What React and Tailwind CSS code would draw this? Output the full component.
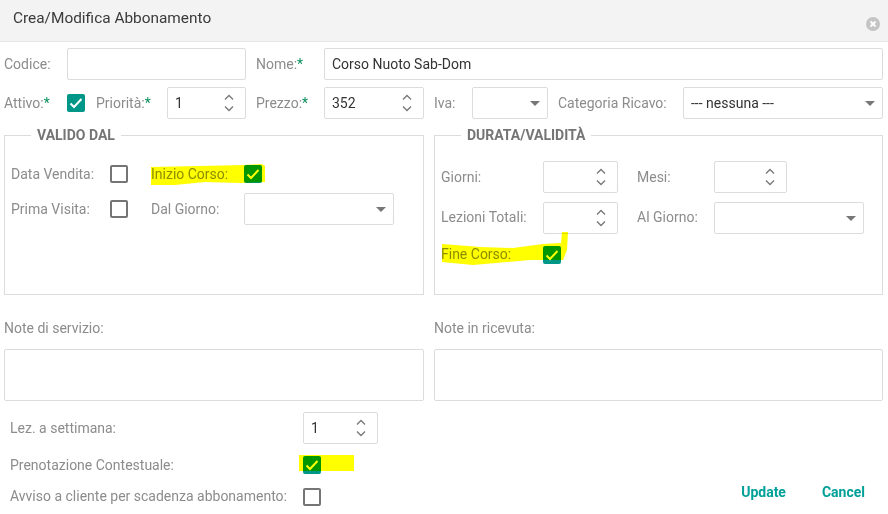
import React from 'react';

const Label = ({ className = '', children, req }) => (
    <span className={`shrink-0 text-[14px] text-[#8c8c8c] whitespace-nowrap ${className}`}>
        {children}
        {req && <span className="text-[#0a8f5c]">*</span>}
    </span>
);

const TextBox = ({ className = '', value }) => (
    <div className={`flex h-[32px] shrink-0 items-center rounded-[2px] border border-[#dcdcdc] bg-white px-[7px] text-[14px] text-[#333] ${className}`}>
        {value}
    </div>
);

const Spin = ({ className = '', value }) => (
    <div className={`flex h-[32px] shrink-0 items-center justify-between rounded-[2px] border border-[#dcdcdc] bg-white pl-[7px] pr-[10px] text-[14px] text-[#333] ${className}`}>
        <span>{value}</span>
        <svg width="12" height="20" viewBox="0 0 12 20" fill="none" stroke="#777" strokeWidth="1.3">
            <path d="M2 6.5 6 2.5 10 6.5" />
            <path d="M2 13.5 6 17.5 10 13.5" />
        </svg>
    </div>
);

const Select = ({ className = '', value }) => (
    <div className={`flex h-[32px] shrink-0 items-center justify-between rounded-[2px] border border-[#dcdcdc] bg-white pl-[7px] pr-[7px] text-[14px] text-[#333] ${className}`}>
        <span>{value}</span>
        <svg width="10" height="5" viewBox="0 0 10 5" fill="#777">
            <path d="M0 0h10L5 5z" />
        </svg>
    </div>
);

const Check = ({ on, className = '' }) =>
    on ? (
        <div className={`flex h-[18px] w-[18px] shrink-0 items-center justify-center rounded-[2px] bg-[#009688] ${className}`}>
            <svg width="14" height="12" viewBox="0 0 14 12" fill="none" stroke="#fff" strokeWidth="2">
                <path d="M1.5 6.5 5 10 12.5 2" />
            </svg>
        </div>
    ) : (
        <div className={`h-[18px] w-[18px] shrink-0 rounded-[2px] border-2 border-[#757575] bg-white ${className}`} />
    );

const Legend = ({ children }) => (
    <legend className="ml-[20px] px-[6px] text-[14px] font-bold leading-[16px] text-[#757575]">{children}</legend>
);

export default function App() {
    return (
        <div className="relative h-[514px] w-[888px] overflow-hidden bg-white font-['Roboto',sans-serif]">
            {/* header */}
            <div className="flex h-[42px] items-start justify-between border-b border-[#e6e6e6] bg-[#f3f3f3] pl-[13px] pr-[8px]">
                <span className="mt-[8px] text-[15.4px] leading-[20px] text-[#3a3a3a]">Crea/Modifica Abbonamento</span>
                <svg className="mt-[17px]" width="14" height="14" viewBox="0 0 14 14">
                    <circle cx="7" cy="7" r="7" fill="#c4c4c4" />
                    <path d="M4.5 4.5l5 5M9.5 4.5l-5 5" stroke="#fff" strokeWidth="2" />
                </svg>
            </div>

            <div className="pl-[4px] pr-[5px]">
                {/* codice / nome */}
                <div className="mt-[6px] flex items-center">
                    <Label className="w-[63px]">Codice:</Label>
                    <TextBox className="w-[179px]" />
                    <Label className="ml-[10px] w-[68px]" req>Nome:</Label>
                    <TextBox className="w-[559px]" value="Corso Nuoto Sab-Dom" />
                </div>

                {/* attivo / priorita / prezzo / iva / categoria */}
                <div className="mt-[7px] flex items-center">
                    <Label className="w-[63px]" req>Attivo:</Label>
                    <Check on />
                    <Label className="ml-[11px] w-[71px]" req>Priorità:</Label>
                    <Spin className="w-[79px]" value="1" />
                    <Label className="ml-[10px] w-[68px]" req>Prezzo:</Label>
                    <Spin className="w-[100px]" value="352" />
                    <Label className="ml-[10px] w-[38px]">Iva:</Label>
                    <Select className="w-[76px]" />
                    <Label className="ml-[10px] w-[125px]">Categoria Ricavo:</Label>
                    <Select className="w-[200px]" value="--- nessuna ---" />
                </div>

                {/* fieldsets */}
                <div className="mt-[8px] flex gap-[10px]">
                    <fieldset className="h-[168px] w-[420px] border border-[#dcdcdc] px-[6px]">
                        <Legend>VALIDO DAL</Legend>
                        <div className="mt-[15px] flex h-[32px] items-center">
                            <Label className="w-[99px]">Data Vendita:</Label>
                            <Check />
                            <Label className="ml-[23px] w-[93px]">Inizio Corso:</Label>
                            <Check on />
                        </div>
                        <div className="mt-[3px] flex items-center">
                            <Label className="w-[99px]">Prima Visita:</Label>
                            <Check />
                            <Label className="ml-[23px] w-[93px]">Dal Giorno:</Label>
                            <Select className="w-[150px]" />
                        </div>
                    </fieldset>

                    <fieldset className="h-[168px] w-[449px] border border-[#dcdcdc] px-[6px]">
                        <Legend>DURATA/VALIDITÀ</Legend>
                        <div className="mt-[18px] flex items-center">
                            <Label className="w-[102px]">Giorni:</Label>
                            <Spin className="w-[75px]" />
                            <Label className="ml-[19px] w-[77px]">Mesi:</Label>
                            <Spin className="w-[73px]" />
                        </div>
                        <div className="mt-[8px] flex items-center">
                            <Label className="w-[102px]">Lezioni Totali:</Label>
                            <Spin className="w-[75px]" />
                            <Label className="ml-[19px] w-[77px]">Al Giorno:</Label>
                            <Select className="mt-[1px] w-[150px]" />
                        </div>
                        <div className="mt-[10px] flex items-center">
                            <Label className="w-[102px]">Fine Corso:</Label>
                            <Check on />
                        </div>
                    </fieldset>
                </div>

                {/* note */}
                <div className="mt-[23px] flex gap-[10px]">
                    <div className="w-[420px]">
                        <div className="h-[20px] text-[14px] leading-[20px] text-[#8c8c8c]">Note di servizio:</div>
                        <div className="mt-[11px] h-[52px] rounded-[2px] border border-[#dcdcdc]" />
                    </div>
                    <div className="w-[449px]">
                        <div className="h-[20px] text-[14px] leading-[20px] text-[#8c8c8c]">Note in ricevuta:</div>
                        <div className="mt-[11px] h-[52px] rounded-[2px] border border-[#dcdcdc]" />
                    </div>
                </div>

                {/* bottom */}
                <div className="mt-[11px] flex items-end justify-between pl-[6px]">
                    <div>
                        <div className="flex items-center">
                            <Label className="w-[293px]">Lez. a settimana:</Label>
                            <Spin className="w-[75px]" value="1" />
                        </div>
                        <div className="mt-[10px] flex items-center">
                            <Label className="w-[293px] translate-y-[1px]">Prenotazione Contestuale:</Label>
                            <Check on />
                        </div>
                        <div className="mt-[11px] flex items-center">
                            <Label className="w-[293px]">Avviso a cliente per scadenza abbonamento:</Label>
                            <Check />
                        </div>
                    </div>
                    <div className="mb-[4px] flex gap-[36px] pr-[18px] text-[14px] font-bold text-[#00a099]">
                        <span>Update</span>
                        <span>Cancel</span>
                    </div>
                </div>
            </div>

            {/* highlighter marks drawn on top of the form */}
            <svg className="pointer-events-none absolute left-0 top-0 mix-blend-multiply" width="888" height="514" fill="#ffff00">
                <path d="M151 167 L200 166 L244 165 L262 164 L265 166 L265 182 L240 183 L205 182 L175 185 L151 185 Z" />
                <path d="M562 232 L568 232 L567 250 L563 260 L530 260 L473 265 L442 262 L442 244 L480 247 L513 248 L543 244 L561 243 Z" />
                <rect x="299" y="455" width="55" height="16" />
            </svg>
        </div>
    );
}
